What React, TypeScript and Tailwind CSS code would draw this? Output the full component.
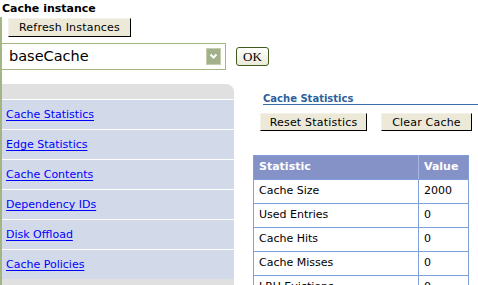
import React from "react";

const navItems = [
  "Cache Statistics",
  "Edge Statistics",
  "Cache Contents",
  "Dependency IDs",
  "Disk Offload",
  "Cache Policies",
];

const rows: [string, string][] = [
  ["Cache Size", "2000"],
  ["Used Entries", "0"],
  ["Cache Hits", "0"],
  ["Cache Misses", "0"],
  ["LRU Evictions", "0"],
];

function XpButton({ label, w, h }: { label: string; w: string; h: string }) {
  return (
    <button
      className={`${w} ${h} bg-[#ece9d8] border border-t-[#f4f2e8] border-l-[#f4f2e8] border-r-[#000000] border-b-[#000000] text-[11px] leading-none text-black flex items-center justify-center p-0 tracking-[0.2px]`}
    >
      {label}
    </button>
  );
}

export default function App() {
  return (
    <div className="w-[478px] h-[285px] overflow-hidden bg-white text-black font-['DejaVu_Sans',sans-serif]">
      <div className="h-[17px] pl-[2px] pt-[2px] text-[11px] font-bold leading-[14px]">
        Cache instance
      </div>
      <div className="border-l-2 border-[#a3b582] h-[268px]">
        <div className="ml-[6px] pt-[1px]">
          <XpButton label="Refresh Instances" w="w-[123px]" h="h-[19px]" />
        </div>
        <div className="mt-[6px] flex items-center">
          <div className="w-[224px] h-[27px] border-y border-r border-[#a3b582] flex items-center justify-between pl-[7px] pr-[4px]">
            <span className="text-[14.5px] leading-none">baseCache</span>
            <span className="w-[15px] h-[17px] bg-[#a2b189] border border-[#c4cfb0] flex items-center justify-center">
              <svg width="9" height="7" viewBox="0 0 9 7">
                <path d="M1.5 1.5 L4.5 4.5 L7.5 1.5" stroke="#ffffff" strokeWidth="2" fill="none" />
              </svg>
            </span>
          </div>
          <button className="ml-[10px] w-[33px] h-[19px] rounded-[3px] border border-[#3f5b1c] bg-gradient-to-b from-[#ffffff] to-[#ecead8] text-[13px] leading-none font-['Liberation_Serif',serif] flex items-center justify-center p-0">
            OK
          </button>
        </div>
        <div className="mt-[14px] flex">
          <div className="w-[232px] flex flex-col">
            <div className="h-[15px] bg-[#e0e0e0] rounded-tr-[8px]" />
            {navItems.map((item) => (
              <div key={item} className="border-t border-white h-[30px] bg-[#d2d9e8] flex items-center pl-[4px]">
                <a href="#" className="text-[11px] leading-none text-[#0000ff] underline underline-offset-2">
                  {item}
                </a>
              </div>
            ))}
            <div className="h-[10px] bg-[#e0e0e0]" />
          </div>
          <div className="flex-1 flex flex-col">
            <div className="mt-[9px] ml-[29px] border-b border-[#3a6da8] text-[10px] font-bold leading-[11px] text-[#2d5f9c]">
              Cache Statistics
            </div>
            <div className="mt-[8px] ml-[26px] flex gap-[14px]">
              <XpButton label="Reset Statistics" w="w-[107px]" h="h-[18px]" />
              <XpButton label="Clear Cache" w="w-[91px]" h="h-[18px]" />
            </div>
            <table className="mt-[24px] ml-[19px] w-[216px] border-collapse text-[11px]">
              <thead>
                <tr className="h-[24px] bg-[#8592c7] text-white font-bold">
                  <th className="border border-[#7f9fd8] border-r-[#a8b8e4] text-left pl-[5px] font-bold w-[165px]">Statistic</th>
                  <th className="border border-[#7f9fd8] text-left pl-[5px] font-bold">Value</th>
                </tr>
              </thead>
              <tbody>
                {rows.map(([k, v]) => (
                  <tr key={k} className="h-[24px]">
                    <td className="border border-[#7f9fd8] pl-[5px]">{k}</td>
                    <td className="border border-[#7f9fd8] pl-[5px]">{v}</td>
                  </tr>
                ))}
              </tbody>
            </table>
          </div>
        </div>
      </div>
    </div>
  );
}
